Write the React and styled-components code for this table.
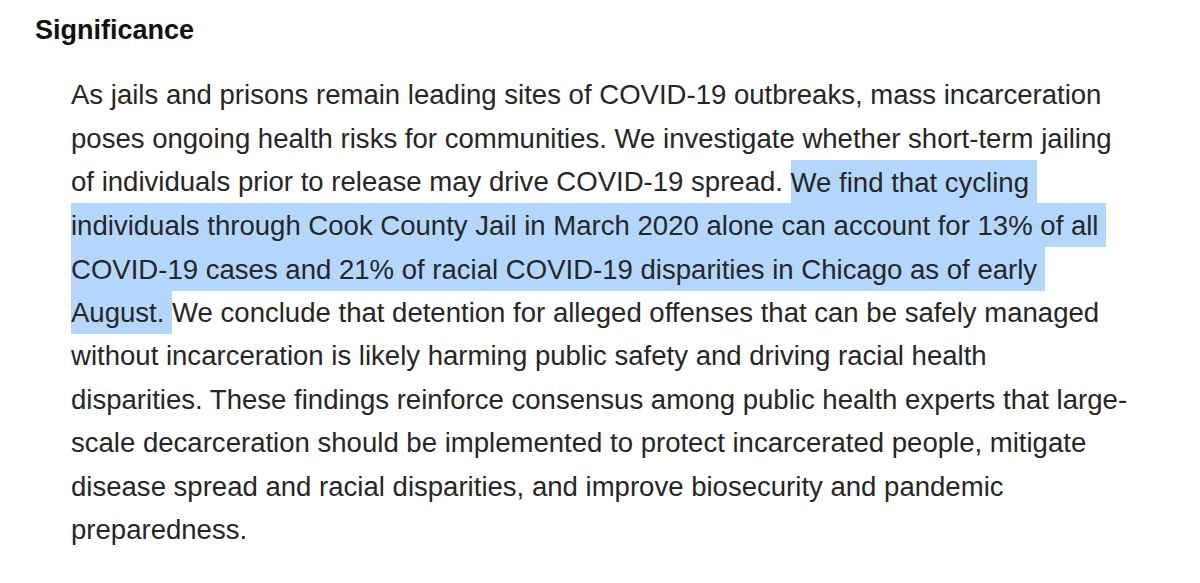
import React from "react";
import styled, { createGlobalStyle } from "styled-components";

const GlobalStyle = createGlobalStyle`
  html, body {
    margin: 0;
    padding: 0;
    background: #ffffff;
  }
  body {
    font-family: "Liberation Sans", Arial, Helvetica, sans-serif;
    -webkit-font-smoothing: antialiased;
  }
`;

const Page = styled.div`
  width: 1200px;
  height: 583px;
  overflow: hidden;
  box-sizing: border-box;
  padding: 14px 0 0 35px;
  background: #fff;
`;

const Heading = styled.h3`
  margin: 0;
  font-size: 27px;
  line-height: 32px;
  font-weight: 700;
  color: #111;
`;

const Abstract = styled.div`
  margin: 27.3px 0 0 36px;
  font-size: 27.55px;
  line-height: 43.5px;
  color: #262626;
`;

const Line = styled.div`
  white-space: nowrap;
`;

// fake text selection, padded so the blue fills the whole line box
const Mark = styled.span`
  background: #b3d7ff;
  padding: 6.5px 0;
`;

const lines = [
  ["As jails and prisons remain leading sites of COVID-19 outbreaks, mass incarceration"],
  ["poses ongoing health risks for communities. We investigate whether short-term jailing"],
  ["of individuals prior to release may drive COVID-19 spread. ", "We find that cycling\u00a0"],
  ["", "individuals through Cook County Jail in March 2020 alone can account for 13% of all\u00a0"],
  ["", "COVID-19 cases and 21% of racial COVID-19 disparities in Chicago as of early\u00a0"],
  ["", "August.\u00a0", "We conclude that detention for alleged offenses that can be safely managed"],
  ["without incarceration is likely harming public safety and driving racial health"],
  ["disparities. These findings reinforce consensus among public health experts that large-"],
  ["scale decarceration should be implemented to protect incarcerated people, mitigate"],
  ["disease spread and racial disparities, and improve biosecurity and pandemic"],
  ["preparedness."],
];

const App = () => {
  return (
    <>
      <GlobalStyle />
      <Page>
        <Heading>Significance</Heading>
        <Abstract>
          {lines.map(([before, marked, after], i) => (
            <Line key={i}>
              {before}
              {marked && <Mark>{marked}</Mark>}
              {after}
            </Line>
          ))}
        </Abstract>
      </Page>
    </>
  );
};

export default App;
